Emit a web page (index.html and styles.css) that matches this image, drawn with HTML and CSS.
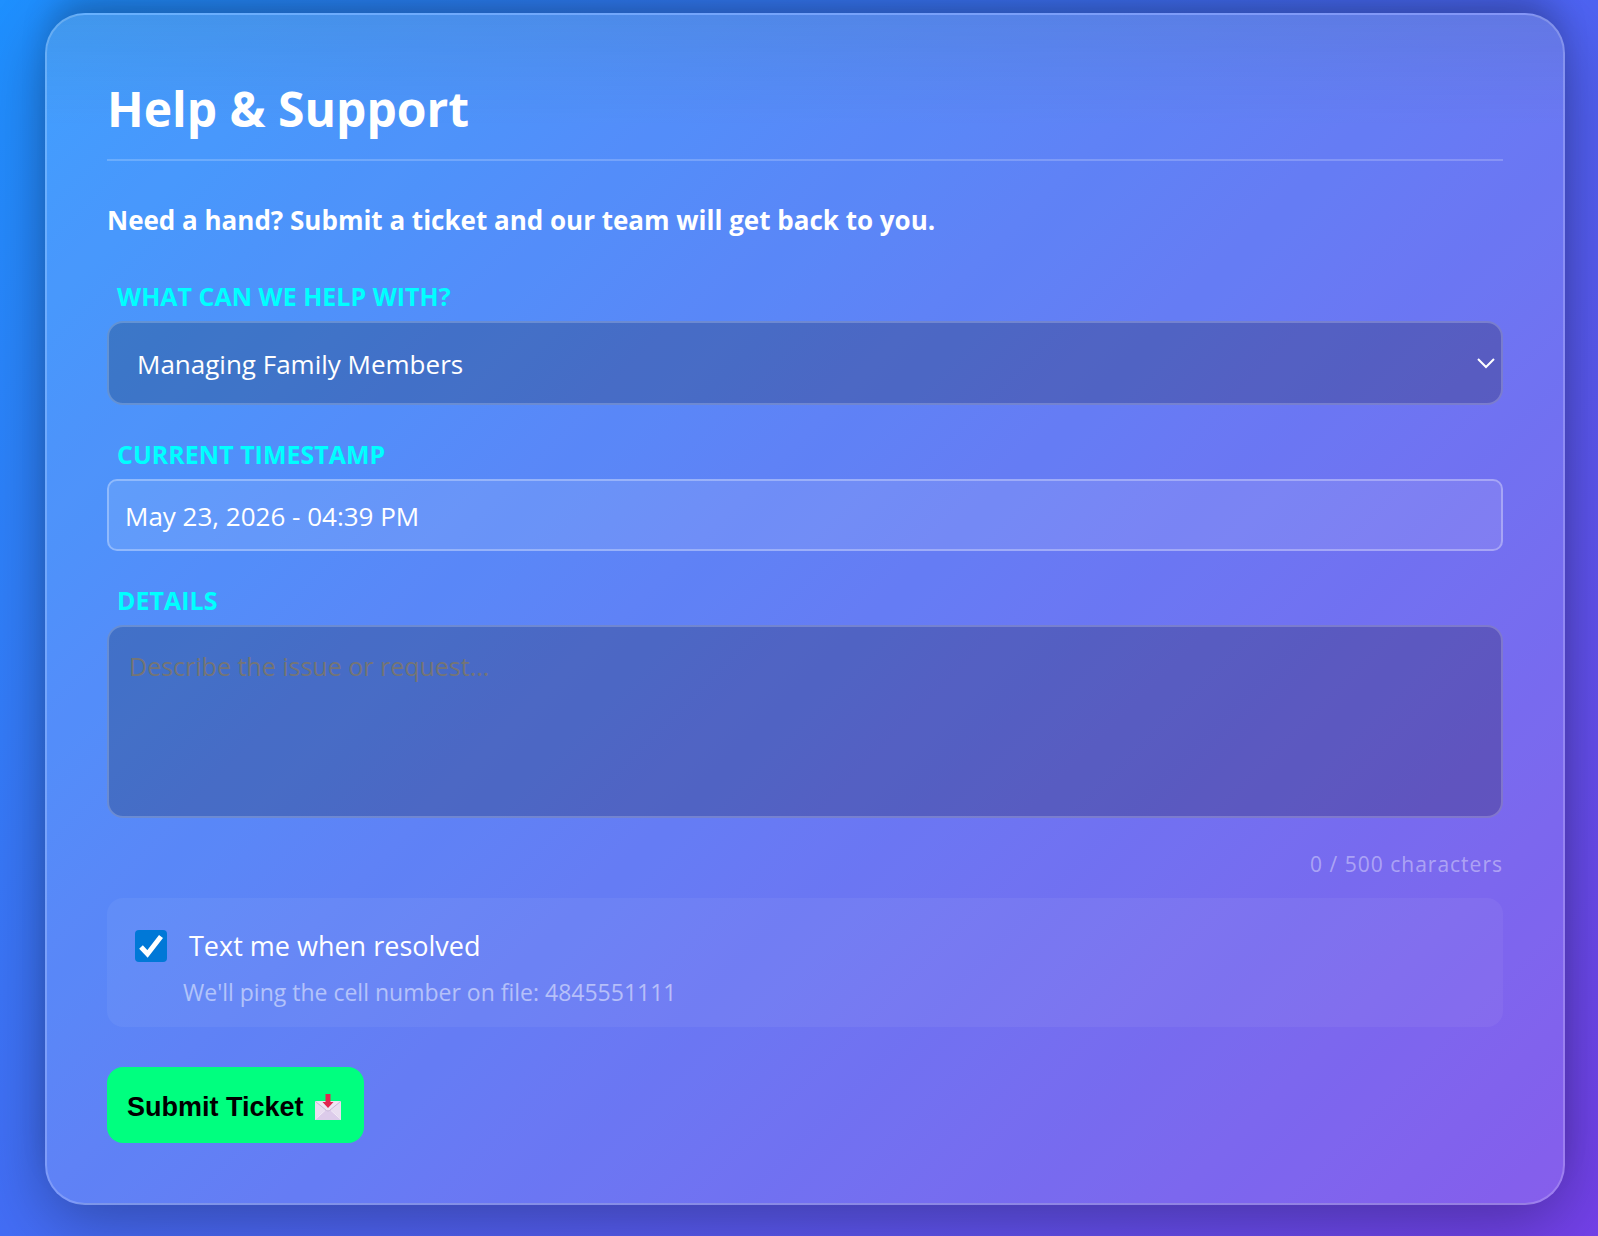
FILE: index.html
```html
<!DOCTYPE html>
<html lang="en">
<head>
    <meta charset="UTF-8">
    <meta name="viewport" content="width=device-width, initial-scale=1.0">
    <title>Help & Support</title>
    <link rel="stylesheet" href="styles.css">
</head>
<body>
    <main class="page">
        <section class="card">
            <h1>Help &amp; Support</h1>
            <p class="intro">Need a hand? Submit a ticket and our team will get back to you.</p>

            <form class="ticket-form">
                <div class="field">
                    <label for="topic">What can we help with?</label>
                    <div class="select-wrap">
                        <select id="topic" class="control control-dark">
                            <option selected>Managing Family Members</option>
                        </select>
                        <svg class="chevron" viewBox="0 0 20 12" aria-hidden="true">
                            <path d="M2 2l8 8 8-8"/>
                        </svg>
                    </div>
                </div>

                <div class="field">
                    <label for="timestamp">Current Timestamp</label>
                    <input type="text" id="timestamp" class="control control-light" value="May 23, 2026 - 04:39 PM" readonly>
                </div>

                <div class="field">
                    <label for="details">Details</label>
                    <textarea id="details" class="control control-dark" maxlength="500" placeholder="Describe the issue or request..."></textarea>
                </div>

                <div class="char-count">0 / 500 characters</div>

                <div class="notify">
                    <label class="notify-row" for="text-me">
                        <span class="check-wrap">
                            <input type="checkbox" id="text-me" checked>
                            <svg class="check" viewBox="0 0 32 32" aria-hidden="true">
                                <path d="M6 17l6.500 7L26 6.500"/>
                            </svg>
                        </span>
                        Text me when resolved
                    </label>
                    <p class="notify-hint">We'll ping the cell number on file: 4845551111</p>
                </div>

                <button type="submit" class="btn-submit">
                    Submit Ticket
                    <svg class="envelope" viewBox="0 0 28 28" aria-hidden="true">
                        <rect x="1" y="8" width="26" height="19" rx="1" fill="#e9def0"/>
                        <path d="M1 26l10-9h6l10 9-1 1H2z" fill="#dccbea"/>
                        <path d="M1 26.500l10-9M27 26.500l-10-9" stroke="#f3ecf7" fill="none"/>
                        <path d="M1.500 8.500l11 9q1.500 1 3 0l11-9" stroke="#c9b8d8" fill="#eee6f3"/>
                        <path d="M11.500 1h5v8h3L14 15 8.500 9h3z" fill="#e1264f"/>
                    </svg>
                </button>
            </form>
        </section>
    </main>
</body>
</html>
```
FILE: styles.css
```css
* {
    box-sizing: border-box;
}

body {
    margin: 0;
    min-height: 100vh;
    font-family: "Segoe UI", "Open Sans", "Noto Sans", sans-serif;
    font-size: 26px;
    line-height: 36px;
    color: #ffffff;
    background: linear-gradient(135deg, #1e90ff 0%, #7340e8 100%);
}

.page {
    padding: 13px 33px 31px 45px;
}

.card {
    padding: 60px;
    border: 2px solid rgba(255, 255, 255, 0.2);
    border-radius: 40px;
    background:
        linear-gradient(rgba(60, 90, 80, 0.1), rgba(60, 90, 80, 0.05) 50px, rgba(60, 90, 80, 0) 110px),
        rgba(255, 255, 255, 0.15);
    box-shadow:
        0 16px 64px rgba(0, 0, 0, 0.3),
        0 -24px 32px -8px rgba(0, 0, 0, 0.2);
}

h1 {
    margin: 0;
    padding-bottom: 16px;
    border-bottom: 2px solid rgba(255, 255, 255, 0.2);
    font-size: 48px;
    line-height: 68px;
    font-weight: 700;
}

.intro {
    margin: 40px 0 38px;
    font-weight: 700;
    line-height: 38px;
}

.ticket-form {
    display: flex;
    flex-direction: column;
}

.field {
    display: flex;
    flex-direction: column;
    gap: 6px;
    margin-bottom: 30px;
}

.field label {
    padding-left: 10px;
    color: #00ffff;
    font-size: 25px;
    font-weight: 700;
    line-height: 38px;
    text-transform: uppercase;
}

.control {
    width: 100%;
    font-family: inherit;
    font-size: 26px;
    line-height: 38px;
    color: #ffffff;
    outline: none;
}

.control-dark {
    border: 2px solid rgba(255, 255, 255, 0.2);
    border-radius: 16px;
    background: rgba(0, 0, 0, 0.2);
}

.control-light {
    height: 72px;
    padding: 2px 16px 0;
    border: 2px solid rgba(255, 255, 255, 0.3);
    border-radius: 10px;
    background: rgba(255, 255, 255, 0.1);
}

.select-wrap {
    position: relative;
}

select.control {
    display: block;
    height: 84px;
    padding: 2px 40px 0 28px;
    appearance: none;
}

.chevron {
    position: absolute;
    right: 7px;
    top: 36px;
    width: 20px;
    height: 12px;
    fill: none;
    stroke: #ffffff;
    stroke-width: 2;
    pointer-events: none;
}

textarea.control {
    height: 193px;
    padding: 20px;
    font-size: 25px;
    resize: none;
}

textarea::placeholder {
    color: #757575;
}

.char-count {
    margin-bottom: 18px;
    font-size: 21px;
    line-height: 32px;
    letter-spacing: 1px;
    text-align: right;
    color: rgba(255, 255, 255, 0.4);
}

.notify {
    margin-bottom: 40px;
    padding: 28px 28px 18px;
    border-radius: 16px;
    background: rgba(255, 255, 255, 0.05);
}

.notify-row {
    display: flex;
    align-items: center;
    gap: 22px;
    font-size: 27px;
    line-height: 40px;
}

.check-wrap {
    position: relative;
    height: 32px;
}

.check-wrap input {
    display: block;
    width: 32px;
    height: 32px;
    margin: 0;
    border-radius: 4px;
    background: #0078d7;
    appearance: none;
}

.check {
    position: absolute;
    inset: 0;
    fill: none;
    stroke: #ffffff;
    stroke-width: 5;
    pointer-events: none;
}

.notify-hint {
    margin: 10px 0 0 48px;
    font-size: 23px;
    line-height: 33px;
    color: rgba(255, 255, 255, 0.5);
}

.btn-submit {
    display: flex;
    align-items: center;
    align-self: flex-start;
    gap: 10px;
    height: 76px;
    padding: 4px 22px 0 20px;
    border: none;
    border-radius: 16px;
    background: #00ff7f;
    color: #000000;
    font-family: Arial, "Liberation Sans", sans-serif;
    font-size: 27px;
    font-weight: 700;
    cursor: pointer;
}

.envelope {
    width: 28px;
    height: 28px;
}
```
